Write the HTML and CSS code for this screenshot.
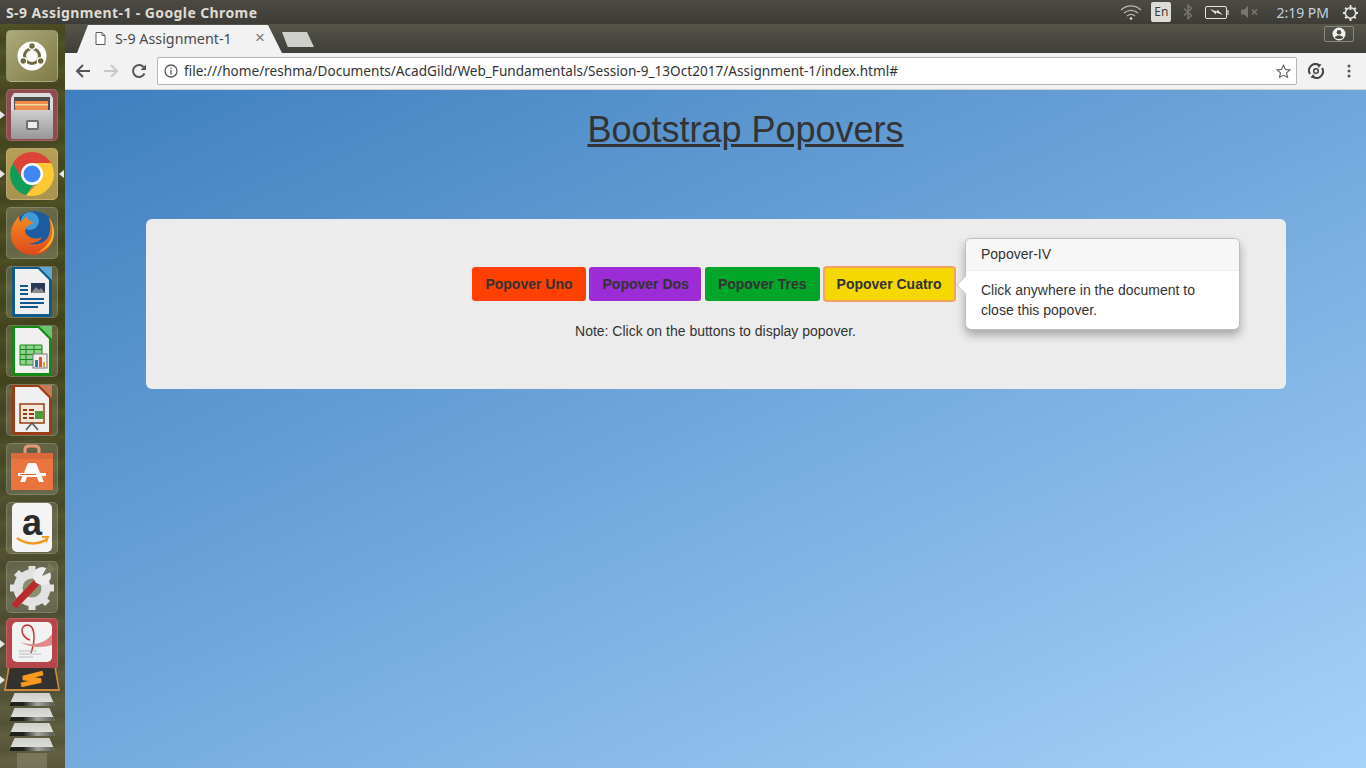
FILE: index.html
```html
<!DOCTYPE html>
<html lang="en">
<head>
    <meta charset="UTF-8">
    <meta name="viewport" content="width=device-width, initial-scale=1.0">
    <title>S-9 Assignment-1</title>
    <link rel="stylesheet" href="styles.css">
</head>
<body>
    <div class="topbar">
        <div class="window-title">S-9 Assignment-1 - Google Chrome</div>
        <div class="tray">
            <svg class="tray-wifi" width="22" height="16" viewBox="0 0 22 16" fill="none" stroke="#b9b8b1" stroke-width="1.3"><path d="M1 6c6-5.500 14-5.500 20 0"/><path d="M4 9c4-3.500 10-3.500 14 0"/><path d="M7 12c2.400-2 5.600-2 8 0"/><circle cx="11" cy="14.500" r="1.200" fill="#e8e8e4" stroke="none"/></svg>
            <div class="tray-lang">En</div>
            <svg class="tray-bt" width="10" height="16" viewBox="0 0 10 16" fill="none" stroke="#77766f" stroke-width="1.400"><path d="M1 4.500l7.500 7L5 15V1l3.500 3.500L1 11.500"/></svg>
            <svg class="tray-battery" width="25" height="13" viewBox="0 0 25 13"><rect x="0.500" y="0.500" width="21" height="12" rx="1.500" fill="none" stroke="#e4e3df"/><rect x="22" y="4" width="2" height="5" fill="#a09f98"/><path d="M5 3l7 2.500 0-2 6 5.500-7-2.500 0 2z" fill="#e4e3df"/></svg>
            <svg class="tray-sound" width="18" height="12" viewBox="0 0 18 12"><path d="M0 3.500h3L7 0v12L3 8.500H0z" fill="#77766f"/><path d="M11 3.500l5 5m0-5l-5 5" stroke="#77766f" stroke-width="1.600"/></svg>
            <div class="tray-clock">2:19 PM</div>
            <svg class="tray-gear" width="17" height="17" viewBox="0 0 17 17" fill="none" stroke="#e4e3df"><circle cx="8.500" cy="9" r="5.200" stroke-width="1.600"/><path d="M8.500 1v5" stroke-width="1.800"/><path d="M8.500 14v3M1 9h2.500M13.500 9H16M3.200 3.700l1.700 1.700M12.100 12.600l1.700 1.700M13.800 3.700l-1.700 1.700M4.900 12.600l-1.700 1.700" stroke-width="2"/></svg>
        </div>
    </div>

    <div class="desktop">
        <div class="dock">
            <div class="dock-item dock-ubuntu">
                <svg width="52" height="52" viewBox="0 0 52 52"><circle cx="26" cy="26" r="14.500" fill="#fff"/><circle cx="26" cy="26" r="7.500" fill="none" stroke="#6f6a3e" stroke-width="3"/><circle cx="26" cy="16" r="4" fill="#fff"/><circle cx="17.300" cy="31" r="4" fill="#fff"/><circle cx="34.700" cy="31" r="4" fill="#fff"/><circle cx="26" cy="16" r="2.700" fill="#6f6a3e"/><circle cx="17.300" cy="31" r="2.700" fill="#6f6a3e"/><circle cx="34.700" cy="31" r="2.700" fill="#6f6a3e"/></svg>
            </div>
            <div class="dock-item dock-files pip-left">
                <svg width="52" height="52" viewBox="0 0 52 52"><defs><linearGradient id="cab" x1="0" y1="0" x2="0" y2="1"><stop offset="0" stop-color="#cfcfcf"/><stop offset="1" stop-color="#979797"/></linearGradient></defs><path d="M8 4h36l3 5v12H5V9z" fill="#dcdcdc"/><path d="M8 8h36v13H8z" fill="#4d4d4d"/><path d="M9 12h33v9H9z" fill="#ee8a4c"/><path d="M9 15h33v1.500H9z" fill="#f8d9a2"/><path d="M5 21h42v27a2 2 0 0 1-2 2H7a2 2 0 0 1-2-2z" fill="url(#cab)"/><rect x="20" y="31" width="13" height="10" rx="2" fill="#6e6e6e"/><rect x="22" y="33" width="9" height="6" fill="#ededed"/></svg>
            </div>
            <div class="dock-item dock-chrome pip-left pip-right">
                <svg width="52" height="52" viewBox="0 0 52 52"><path d="M45 15A22 22 0 0 0 7 15L16.500 31.500 26 15z" fill="#db4437"/><path d="M7 15A22 22 0 0 0 20 47.200L31 31 16.500 31.500z" fill="#109d58"/><path d="M45 15A22 22 0 0 1 20 47.200L35.500 31.500 26 15z" fill="#fcc934"/><circle cx="26" cy="26" r="11" fill="#fff"/><circle cx="26" cy="26" r="8.500" fill="#4285f4"/></svg>
            </div>
            <div class="dock-item dock-firefox">
                <svg width="52" height="52" viewBox="0 0 52 52"><defs><linearGradient id="fox" x1="0" y1="0" x2="0" y2="1"><stop offset="0" stop-color="#f58a1f"/><stop offset="1" stop-color="#dd4a1c"/></linearGradient></defs><circle cx="28" cy="24" r="20" fill="#1c5b9e"/><circle cx="24" cy="14" r="9" fill="#3f9ad6"/><path d="M13 9C10 13 7 15 5 24 3 37 13 48 27 48 40 48 48 38 48 26 48 20 46 14 43 11 45 18 45 24 42 30 38 37 28 39 22 36 27 37 34 35 36 30 30 33 24 31 21 28 18 25 19 21 22 19 24 17 27 17 27 15 24 14 22 13 21 10 18 11 16 13 15 15 13 13 13 11 13 9z" fill="url(#fox)"/><path d="M43 11C47 18 48 28 43 35 40 40 35 44 30 46 37 45 48 38 48 26 48 20 46 14 43 11z" fill="#f9b81f"/></svg>
            </div>
            <div class="dock-item dock-plain">
                <svg width="52" height="52" viewBox="0 0 52 52"><path d="M6 1h40v47a3 3 0 0 1-3 3H9a3 3 0 0 1-3-3z" fill="#0f5a8c"/><path d="M33 1h13v13z" fill="#5fa8d3"/><path d="M9 3h23l11 11v34H9z" fill="#f0f0f0"/><path d="M14 19h8v2h-8zM14 23h8v2h-8zM14 27h8v2h-8zM14 32h24v2H14zM14 36h24v2H14zM14 40h18v2H14z" fill="#0f5a8c"/><rect x="25" y="17" width="14" height="10" fill="#2a3a55"/><path d="M25 27l5-6 3 3 2-2 4 5z" fill="#8a8a8a"/></svg>
            </div>
            <div class="dock-item dock-plain">
                <svg width="52" height="52" viewBox="0 0 52 52"><path d="M6 1h40v47a3 3 0 0 1-3 3H9a3 3 0 0 1-3-3z" fill="#138a13"/><path d="M33 1h13v13z" fill="#6cc46c"/><path d="M9 3h23l11 11v34H9z" fill="#f0f0f0"/><path d="M14 20h22v20H14z" fill="#8fd08f"/><path d="M14 24.500h22M14 29.500h22M14 34.500h22M20 20v20M28 20v20M14 20h22v20H14z" fill="none" stroke="#138a13" stroke-width="1"/><rect x="27" y="29" width="14" height="14" fill="#eee" stroke="#777"/><path d="M29 35h3v7h-3z" fill="#2a78b8"/><path d="M33 32h3v10h-3z" fill="#e8532b"/><path d="M37 37h2v5h-2z" fill="#e8a62b"/></svg>
            </div>
            <div class="dock-item dock-plain">
                <svg width="52" height="52" viewBox="0 0 52 52"><path d="M6 1h40v47a3 3 0 0 1-3 3H9a3 3 0 0 1-3-3z" fill="#9a3c14"/><path d="M33 1h13v13z" fill="#c87a55"/><path d="M9 3h23l11 11v34H9z" fill="#f0f0f0"/><rect x="14" y="20" width="24" height="19" fill="#f5e6da" stroke="#9a3c14" stroke-width="1.500"/><path d="M17 25h4v2h-4zM23 25h5v2h-5zM17 29h4v2h-4zM23 29h5v2h-5zM17 33h4v2h-4zM23 33h5v2h-5z" fill="#9a3c14"/><rect x="29" y="27" width="8" height="8" fill="#4c9a3c"/><path d="M20 46l6-7 6 7" fill="none" stroke="#555" stroke-width="1.500"/></svg>
            </div>
            <div class="dock-item dock-plain">
                <svg width="52" height="52" viewBox="0 0 52 52"><path d="M19 13V6a4 4 0 0 1 4-3h6a4 4 0 0 1 4 3v7" fill="none" stroke="#e89878" stroke-width="3"/><path d="M5 10h42v37H5z" fill="#ea7440"/><path d="M5 10h42v6H5z" fill="#d9683a"/><path d="M22 20h8l8 19h-5l-2-5H21l-2 5h-5z" fill="#fff"/><path d="M12 30h28v3H12z" fill="#fff"/><path d="M14 31h16v1H14z" fill="#d9683a"/></svg>
            </div>
            <div class="dock-item dock-plain">
                <svg width="52" height="52" viewBox="0 0 52 52"><rect x="6" y="1" width="40" height="49" rx="5" fill="#f4f4f4"/><text class="amazon-a" x="26" y="33" text-anchor="middle">a</text><path d="M11 36c9 7 22 7 30 1" fill="none" stroke="#f09a1f" stroke-width="2.500"/><path d="M36 35l6 0-2 5" fill="none" stroke="#f09a1f" stroke-width="2"/></svg>
            </div>
            <div class="dock-item dock-plain">
                <svg width="52" height="52" viewBox="0 0 52 52"><circle cx="26" cy="27" r="14" fill="none" stroke="#e2e2e2" stroke-width="9"/><path d="M26 5v44M4 27h44M10.500 11.500l31 31M41.500 11.500l-31 31" stroke="#e2e2e2" stroke-width="7"/><circle cx="26" cy="27" r="9.500" fill="#8d8d70"/><path d="M10 43L31 21" stroke="#b92c2c" stroke-width="7" stroke-linecap="round"/><circle cx="36" cy="15" r="9" fill="#ececec"/><path d="M36 15L43 2l7 7z" fill="#77775a"/></svg>
            </div>
            <div class="dock-item dock-writer pip-left">
                <svg width="52" height="52" viewBox="0 0 52 52"><rect x="6" y="4" width="40" height="40" rx="5" fill="#f2f2f2"/><path d="M24 22c-9-3-11-14-3-15 8 0 9 14 4 28" fill="none" stroke="#c93434" stroke-width="1.500"/><path d="M14 24c11 4 24 3 32-8v11c-10 3-22 3-32-3z" fill="#dc8a8a"/><path d="M13 33h18M13 36h22M13 39h14" stroke="#bbb" stroke-width="1"/></svg>
            </div>
            <div class="dock-stack">
                <div class="dock-sublime-wrap pip-left">
                    <div class="dock-sublime">
                        <div class="dock-sublime-inner">
                            <svg width="26" height="17" viewBox="0 0 26 17" fill="none" stroke="#f79a1e" stroke-width="4.500"><path d="M24 3L4 8l18 2.500L2 15"/></svg>
                        </div>
                    </div>
                </div>
                <div class="dock-disk"></div>
                <div class="dock-disk"></div>
                <div class="dock-disk"></div>
                <div class="dock-disk"></div>
                <div class="dock-trash"></div>
            </div>
        </div>

        <div class="browser">
            <div class="tabstrip">
                <div class="tab">
                    <svg width="11" height="13" viewBox="0 0 11 13" fill="#fff" stroke="#5a5a5a"><path d="M1 .5h6l3 3v9H1z"/><path d="M7 .5v3h3" fill="none"/></svg>
                    <span class="tab-title">S-9 Assignment-1</span>
                    <span class="tab-close">×</span>
                </div>
                <div class="new-tab"></div>
                <div class="profile">
                    <svg width="14" height="14" viewBox="0 0 14 14"><circle cx="7" cy="7" r="6.500" fill="#f2f2f2"/><circle cx="7" cy="5.200" r="2.300" fill="#4a4a40"/><path d="M2.800 10.500c1.500-2.600 6.900-2.600 8.400 0-2 2-6.400 2-8.400 0z" fill="#4a4a40"/></svg>
                </div>
            </div>
            <div class="toolbar">
                <svg class="nav-icon" width="16" height="16" viewBox="0 0 16 16" fill="none" stroke="#555" stroke-width="2"><path d="M15 8H2M8 2L2 8l6 6"/></svg>
                <svg class="nav-icon" width="16" height="16" viewBox="0 0 16 16" fill="none" stroke="#c8c8c8" stroke-width="2"><path d="M1 8h13M8 2l6 6-6 6"/></svg>
                <svg class="nav-icon" width="16" height="16" viewBox="0 0 16 16" fill="none" stroke="#555" stroke-width="2"><path d="M13.500 10.500A6 6 0 1 1 12.500 4"/><path d="M15 1.500V7H9.500z" fill="#555" stroke="none"/></svg>
                <div class="omnibox">
                    <svg width="14" height="14" viewBox="0 0 14 14" fill="none" stroke="#5a5a5a" stroke-width="1.300"><circle cx="7" cy="7" r="6"/><path d="M7 6v4.500M7 3.500v1.300"/></svg>
                    <span class="url">file:///home/reshma/Documents/AcadGild/Web_Fundamentals/Session-9_13Oct2017/Assignment-1/index.html#</span>
                    <svg class="star" width="15" height="15" viewBox="0 0 15 15" fill="none" stroke="#666" stroke-width="1.200"><path d="M7.500 1.200l1.900 4.200 4.500.5-3.400 3 1 4.500-4-2.300-4 2.300 1-4.500-3.400-3 4.500-.5z"/></svg>
                </div>
                <svg class="ext-icon" width="16" height="16" viewBox="0 0 16 16" fill="none" stroke="#444" stroke-width="2"><path d="M2 11A6.500 6.500 0 0 1 10.500 1.800M14 5a6.500 6.500 0 0 1-8.500 9.200"/><circle cx="8" cy="8" r="2.300" stroke-width="1.500"/><path d="M9 .5L13.500 1.500 10.500 5zM7 15.500L2.500 14.500 5.500 11z" fill="#444" stroke="none"/></svg>
                <svg class="menu-icon" width="4" height="14" viewBox="0 0 4 14" fill="#555"><circle cx="2" cy="2" r="1.500"/><circle cx="2" cy="7" r="1.500"/><circle cx="2" cy="12" r="1.500"/></svg>
            </div>
            <div class="page">
                <h1 class="page-title">Bootstrap Popovers</h1>
                <div class="panel">
                    <div class="btn-row">
                        <button class="btn btn-uno">Popover Uno</button>
                        <button class="btn btn-dos">Popover Dos</button>
                        <button class="btn btn-tres">Popover Tres</button>
                        <button class="btn btn-cuatro">Popover Cuatro</button>
                        <div class="popover">
                            <div class="popover-head">Popover-IV</div>
                            <div class="popover-body">Click anywhere in the document to close this popover.</div>
                        </div>
                    </div>
                    <p class="note">Note: Click on the buttons to display popover.</p>
                </div>
            </div>
        </div>
    </div>
</body>
</html>
```

FILE: styles.css
```css
* {
    box-sizing: border-box;
    margin: 0;
    padding: 0;
}

html, body {
    height: 768px;
    overflow: hidden;
}

body {
    font-family: "Liberation Sans", Arial, sans-serif;
    font-size: 14px;
    color: #333;
    background: #3f3e39;
}

.topbar {
    height: 24px;
    display: flex;
    align-items: center;
    justify-content: space-between;
    background: linear-gradient(#4b4a44, #3d3c37);
    color: #dfdbd2;
}

.window-title {
    padding-left: 6px;
    font-family: "Noto Sans", sans-serif;
    font-size: 14px;
    font-weight: 700;
    letter-spacing: 0.4px;
}

.tray {
    display: flex;
    align-items: center;
    height: 24px;
}

.tray-wifi {
    margin-right: 9px;
}

.tray-lang {
    width: 20px;
    height: 20px;
    margin-right: 12px;
    border-radius: 2px;
    background: #dedcd6;
    color: #3d3c37;
    font-family: "Noto Sans", sans-serif;
    font-size: 12px;
    line-height: 20px;
    text-align: center;
}

.tray-bt {
    margin-right: 12px;
}

.tray-battery {
    margin-right: 11px;
}

.tray-sound {
    margin-right: 17px;
}

.tray-clock {
    margin-right: 13px;
    font-family: "Noto Sans", sans-serif;
    font-size: 14px;
    color: #c4d2de;
}

.tray-gear {
    margin-right: 7px;
}

.desktop {
    display: flex;
    height: 744px;
}

.dock {
    width: 65px;
    flex: none;
    display: flex;
    flex-direction: column;
    align-items: center;
    padding: 6px 1px 0 0;
    gap: 7px;
    background:
        repeating-linear-gradient(172deg, rgba(120, 130, 60, 0.14) 0, rgba(120, 130, 60, 0) 9px, rgba(30, 35, 10, 0.12) 17px, rgba(120, 130, 60, 0.06) 26px),
        linear-gradient(#4b4c24, #45461f 45%, #55533a 85%, #5f5c40);
}

.dock-item {
    position: relative;
    width: 52px;
    height: 52px;
    border-radius: 5px;
    background: rgba(255, 255, 255, 0.14);
    border: 1px solid rgba(255, 255, 255, 0.16);
    flex: none;
}

.dock-item svg {
    display: block;
    margin: -1px;
}

.dock-ubuntu {
    background: linear-gradient(135deg, #aca97b, #7f7b46);
}

.dock-files {
    background: #8f4c50;
}

.dock-chrome {
    background: linear-gradient(#b89f58, #a89350);
}

.dock-firefox {
    background: rgba(255, 255, 255, 0.18);
}

.dock-writer {
    margin-top: -2px;
    background: #b5474a;
}

.amazon-a {
    font-family: "Liberation Sans", sans-serif;
    font-size: 36px;
    font-weight: 700;
    fill: #2b2b2b;
}

.pip-left::before {
    content: "";
    position: absolute;
    left: -7px;
    top: 50%;
    margin-top: -4px;
    border: 4px solid transparent;
    border-left: 5px solid #e6e6e6;
}

.pip-right::after {
    content: "";
    position: absolute;
    right: -7px;
    top: 50%;
    margin-top: -4px;
    border: 4px solid transparent;
    border-right: 5px solid #e6e6e6;
}

.dock-stack {
    display: flex;
    flex-direction: column;
    align-items: center;
    margin-top: -9px;
}

.dock-sublime-wrap {
    position: relative;
    width: 56px;
    height: 23px;
}

.dock-sublime-wrap::before {
    left: -4px;
}

.dock-sublime {
    width: 56px;
    height: 23px;
    padding: 0 2px 2px;
    background: #c98a3e;
    clip-path: polygon(7% 0, 93% 0, 100% 100%, 0 100%);
}

.dock-sublime-inner {
    height: 21px;
    background: #33322e;
    clip-path: polygon(7% 0, 93% 0, 100% 100%, 0 100%);
    display: flex;
    justify-content: center;
    align-items: center;
}

.dock-disk {
    width: 46px;
    height: 13px;
    margin-top: 2px;
    background:
        linear-gradient(90deg, #1f1f1c 30%, #a5a59f 62%, #55554f) bottom / 100% 4px no-repeat,
        linear-gradient(#cfcfca, #e4e4e0);
    clip-path: polygon(12% 0, 88% 0, 100% 100%, 0 100%);
}

.dock-trash {
    width: 30px;
    height: 16px;
    margin-top: 2px;
    background: rgba(220, 220, 210, 0.2);
}

.browser {
    flex: 1;
    display: flex;
    flex-direction: column;
    min-width: 0;
}

.tabstrip {
    position: relative;
    height: 29px;
    padding-left: 12px;
    display: flex;
    align-items: flex-end;
    background: linear-gradient(#56554b, #3f3e38);
}

.tab {
    display: flex;
    align-items: center;
    width: 205px;
    height: 28px;
    padding: 0 17px 2px 18px;
    background: #f2f2f2;
    clip-path: polygon(0 100%, 11px 0, 191px 0, 100% 100%);
}

.tab-title {
    flex: 1;
    margin-left: 9px;
    font-family: "Noto Sans", sans-serif;
    font-size: 14.3px;
    color: #4a4a4a;
    white-space: nowrap;
}

.tab-close {
    font-size: 17px;
    color: #777;
}

.new-tab {
    width: 32px;
    height: 15px;
    margin: 0 0 6px 0;
    background: #cfcfcc;
    clip-path: polygon(0 0, 78% 0, 100% 100%, 18% 100%);
}

.profile {
    position: absolute;
    top: 2px;
    right: 12px;
    width: 30px;
    height: 16px;
    display: flex;
    align-items: center;
    justify-content: center;
    border: 1px solid #8a897f;
    border-radius: 2px;
}

.toolbar {
    height: 37px;
    display: flex;
    align-items: center;
    padding: 0 15px 0 10px;
    background: #f2f2f2;
    border-bottom: 1px solid #d0d0d0;
}

.nav-icon {
    margin-right: 12px;
    flex: none;
}

.omnibox {
    flex: 1;
    height: 28px;
    margin: 0 11px 0 -2px;
    display: flex;
    align-items: center;
    gap: 6px;
    padding: 0 5px 0 6px;
    background: #fff;
    border: 1px solid #b5b5b5;
    border-radius: 2px;
}

.url {
    flex: 1;
    padding-bottom: 1px;
    font-family: "Noto Sans", sans-serif;
    font-size: 13.6px;
    color: #333;
    white-space: nowrap;
    overflow: hidden;
}

.ext-icon {
    margin-right: 23px;
    flex: none;
}

.menu-icon {
    flex: none;
}

.page {
    flex: 1;
    padding: 17px 80px 0 81px;
    background: linear-gradient(155deg, #3f7fbf 0%, #a5d2f9 100%);
}

.page-title {
    margin: 0 0 66px 59px;
    font-size: 36px;
    font-weight: 400;
    line-height: 46px;
    text-align: center;
    text-decoration: underline;
    color: #333;
}

.panel {
    height: 170px;
    padding-top: 48px;
    background: #ececec;
    border-radius: 6px;
}

.btn-row {
    position: relative;
    display: flex;
    justify-content: center;
    gap: 3px;
    margin-left: -5px;
}

.btn {
    height: 34px;
    padding: 0 12px;
    border: 1px solid transparent;
    border-radius: 3px;
    font-family: "Liberation Sans", Arial, sans-serif;
    font-size: 14px;
    font-weight: 700;
    color: #333;
}

.btn-uno {
    background: #ff4000;
}

.btn-dos {
    padding: 0 11px 0 13px;
    background: #9b2cd6;
}

.btn-tres {
    margin-left: 1px;
    background: #00a628;
}

.btn-cuatro {
    margin-left: 1px;
    background: #f5d800;
    border-color: #f3a262;
    box-shadow: 0 0 0 1px #f3a262;
}

.popover {
    position: absolute;
    left: 824px;
    top: -29px;
    width: 275px;
    background: #fff;
    border: 1px solid rgba(0, 0, 0, 0.25);
    border-radius: 6px;
    box-shadow: 0 5px 10px rgba(0, 0, 0, 0.3);
}

.popover::before {
    content: "";
    position: absolute;
    left: -7px;
    top: 39px;
    width: 13px;
    height: 13px;
    background: #fff;
    border-left: 1px solid rgba(0, 0, 0, 0.2);
    border-bottom: 1px solid rgba(0, 0, 0, 0.2);
    transform: rotate(45deg);
}

.popover-head {
    position: relative;
    height: 32px;
    padding: 0 15px;
    line-height: 31px;
    background: #f7f7f7;
    border-bottom: 1px solid #ebebeb;
    border-radius: 5px 5px 0 0;
}

.popover-body {
    position: relative;
    padding: 9px 15px;
    line-height: 20px;
}

.note {
    margin-top: 20px;
    padding-right: 1px;
    text-align: center;
    line-height: 20px;
}
```
